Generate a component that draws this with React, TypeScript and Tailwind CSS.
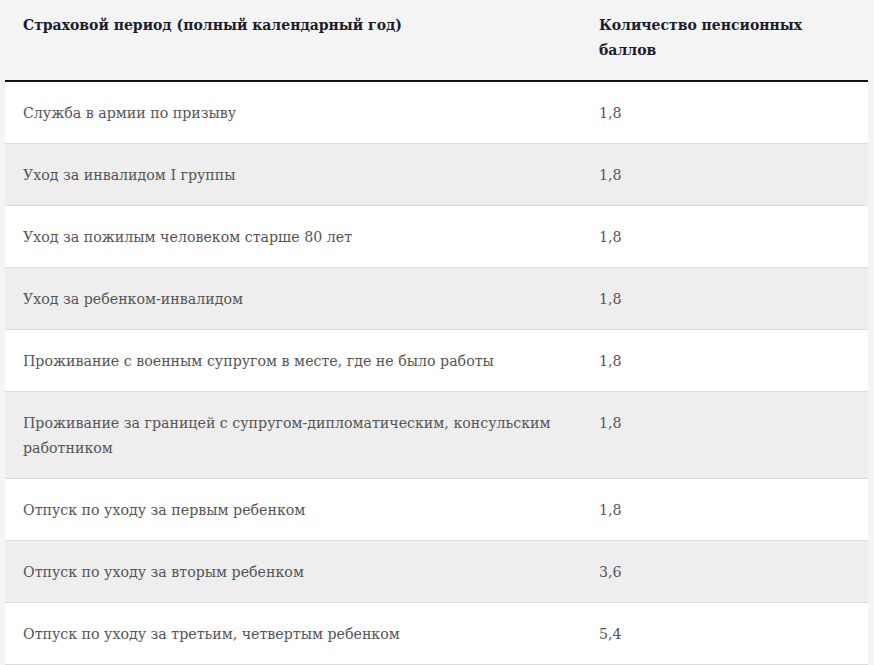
import React from "react";

const rows: [string, string][] = [
  ["Служба в армии по призыву", "1,8"],
  ["Уход за инвалидом I группы", "1,8"],
  ["Уход за пожилым человеком старше 80 лет", "1,8"],
  ["Уход за ребенком-инвалидом", "1,8"],
  ["Проживание с военным супругом в месте, где не было работы", "1,8"],
  ["Проживание за границей с супругом-дипломатическим, консульским работником", "1,8"],
  ["Отпуск по уходу за первым ребенком", "1,8"],
  ["Отпуск по уходу за вторым ребенком", "3,6"],
  ["Отпуск по уходу за третьим, четвертым ребенком", "5,4"],
];

export default function App() {
  return (
    <div
      className="w-[874px] h-[665px] overflow-hidden bg-[#f4f4f4] pl-[5px]"
      style={{ fontFamily: '"DejaVu Serif", "Liberation Serif", serif' }}
    >
      <div className="w-[863px]">
        <div className="flex h-[82px] border-b-[2px] border-[#111] text-[14px] leading-[25px] font-bold text-[#1c1c2c] pt-[13px]">
          <div className="w-[576px] pl-[18px] pr-4">Страховой период (полный календарный год)</div>
          <div className="w-[240px] pl-[18px]">Количество пенсионных баллов</div>
        </div>
        {rows.map(([a, b], i) => (
          <div
            key={i}
            className={`flex border-b border-[#dcdcdc] text-[14.2px] leading-[25px] text-[#555] pt-[19px] pb-[17px] ${
              i % 2 === 0 ? "bg-white" : "bg-[#eeeeee]"
            }`}
          >
            <div className="w-[576px] pl-[18px] pr-3">{a}</div>
            <div className="pl-[18px]">{b}</div>
          </div>
        ))}
      </div>
    </div>
  );
}
